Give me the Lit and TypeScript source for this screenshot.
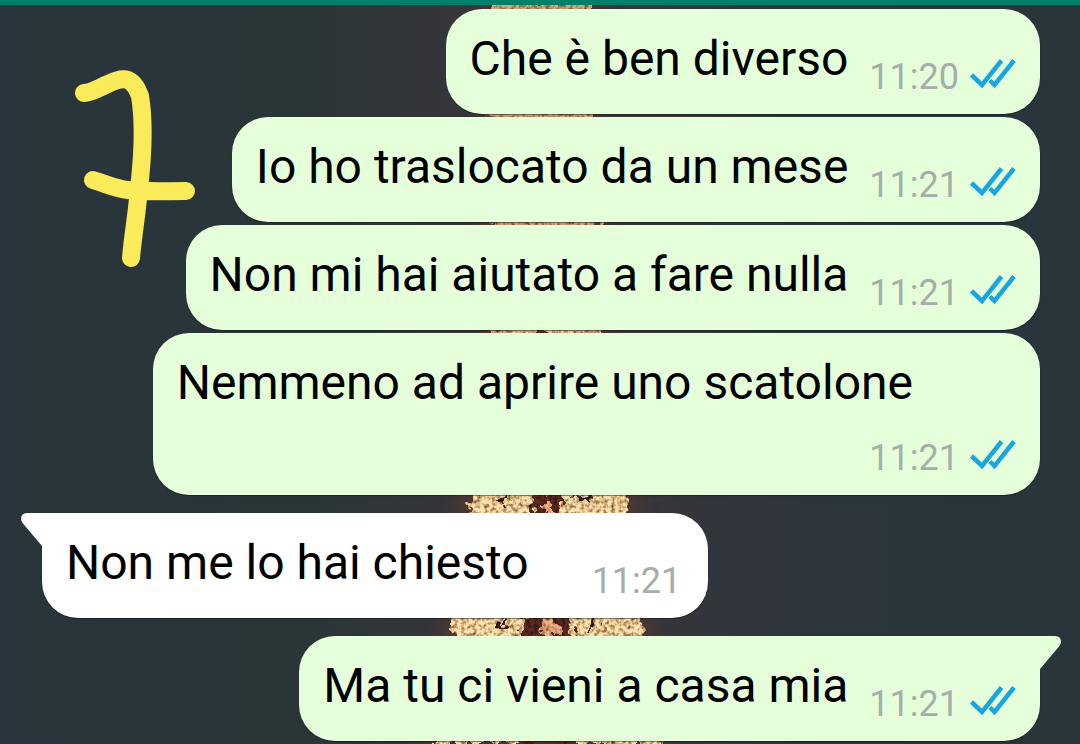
import { LitElement, html, css, svg, nothing } from "lit";
import { customElement, property } from "lit/decorators.js";

interface Message {
  text: string;
  time: string;
  out: boolean;
  tail?: boolean;
  wrap?: boolean;
}

const MESSAGES: Message[] = [
  { text: "Che è ben diverso", time: "11:20", out: true },
  { text: "Io ho traslocato da un mese", time: "11:21", out: true },
  { text: "Non mi hai aiutato a fare nulla", time: "11:21", out: true },
  { text: "Nemmeno ad aprire uno scatolone", time: "11:21", out: true, wrap: true },
  { text: "Non me lo hai chiesto", time: "11:21", out: false, tail: true },
  { text: "Ma tu ci vieni a casa mia", time: "11:21", out: true, tail: true },
];

@customElement("chat-bubble")
export class ChatBubble extends LitElement {
  @property({ attribute: false }) message!: Message;

  static styles = css`
    :host {
      display: block;
      position: relative;
    }
    .bubble {
      display: flex;
      align-items: flex-end;
      gap: 21px;
      min-height: 105px;
      box-sizing: border-box;
      padding: 18px 24px 13px;
      border-radius: 36px;
      background: #e5ffdb;
      box-shadow: 0 1px 1px rgba(10, 20, 20, 0.5);
    }
    .in {
      gap: 63px;
      padding-right: 27px;
      background: #ffffff;
    }
    .in.tail { border-top-left-radius: 0; }
    .out.tail { border-top-right-radius: 0; }
    .wrap {
      flex-direction: column;
      gap: 19px;
    }
    .text {
      margin: 0;
      align-self: flex-start;
      font-size: 48px;
      line-height: 64px;
      color: #000;
    }
    .wrap .text { padding-right: 103px; }
    .meta {
      display: flex;
      align-items: flex-start;
      gap: 10px;
      font-size: 36px;
      line-height: 48px;
      color: #a6aeaa;
    }
    .ticks { width: 47px; height: 32px; padding-top: 4px; }
    .corner {
      position: absolute;
      top: 0;
      width: 22px;
      height: 34px;
    }
    .in + .corner { right: 100%; margin-right: -1px; fill: #fff; }
    .out + .corner { left: 100%; margin-left: -1px; fill: #e5ffdb; }
  `;

  render() {
    const m = this.message;
    const cls = ["bubble", m.out ? "out" : "in", m.tail ? "tail" : "", m.wrap ? "wrap" : ""].join(" ");
    return html`
      <div class=${cls}>
        <p class="text">${m.text}</p>
        <div class="meta">
          <time>${m.time}</time>
          ${m.out
            ? html`<svg class="ticks" viewBox="0 0 47 32" role="img" aria-label="Letto" fill="none" stroke="#18a5e0" stroke-width="4.500">
                <path d="M2.500 18 L13 28 L32.500 3.500" />
                <path d="M21 23.500 L25.500 28 L45 3.500" />
              </svg>`
            : nothing}
        </div>
      </div>
      ${m.tail
        ? html`<svg class="corner" viewBox="0 0 22 34" aria-hidden="true">
            ${m.out
              ? svg`<path d="M0 0 H16 Q22 0 22 6 Q22 8 20 10.500 L1 33 H0 Z" />`
              : svg`<path d="M22 0 H6 Q0 0 0 6 Q0 8 2 10.500 L21 33 H22 Z" />`}
          </svg>`
        : nothing}
    `;
  }
}

@customElement("app-root")
export class AppRoot extends LitElement {
  static styles = css`
    :host {
      display: block;
      position: relative;
      min-height: 100vh;
      overflow: hidden;
      font-family: Roboto, "Liberation Sans", sans-serif;
      background: linear-gradient(90deg, #28353c, #2b3538 30%, #37353b 44%, #37353b 58%, #2c353b 76%, #28353b);
    }
    .wallpaper,
    .drawing {
      position: absolute;
      top: 0;
    }
    .wallpaper {
      left: 50%;
      margin-left: -140px;
      width: 280px;
      height: 744px;
    }
    .drawing {
      left: 60px;
      top: 50px;
      width: 150px;
      height: 230px;
    }
    .bar {
      position: relative;
      height: 5px;
      background: #00806a;
    }
    .chat {
      position: relative;
      display: flex;
      flex-direction: column;
      align-items: flex-end;
      gap: 3px;
      margin: 0;
      padding: 4px 40px 3px 42px;
      list-style: none;
    }
    .in { align-self: flex-start; }
    .turn { margin-top: 15px; }
  `;

  private wallpaper() {
    return html`<svg class="wallpaper" viewBox="400 0 280 744" aria-hidden="true">
      <defs>
        <filter id="glow" x="-20%" width="140%"><feGaussianBlur stdDeviation="10 4" /></filter>
        <filter id="grain" x="-10%" width="120%" y="0" height="100%" color-interpolation-filters="sRGB">
          <feTurbulence type="fractalNoise" baseFrequency="0.26 0.24" numOctaves="2" seed="8" />
          <feColorMatrix values="1.5 0 0 0 0.16  1.7 0 0 0 0  1.8 0 0 0 -0.14  0 0 0 0 1" result="tex" />
          <feTurbulence type="fractalNoise" baseFrequency="0.12" numOctaves="2" seed="3" result="edge" />
          <feDisplacementMap in="SourceGraphic" in2="edge" scale="22" xChannelSelector="R" yChannelSelector="G" result="shape" />
          <feComposite in="tex" in2="shape" operator="arithmetic" k1="0.9" k2="0" k3="0.08" k4="0" result="lit" />
          <feComposite in="lit" in2="shape" operator="in" />
        </filter>
      </defs>
      <path d="M486 0 H596 L612 333 L636 500 L652 630 L670 744 H424 L444 630 L460 500 L480 333 Z" fill="#59372f" opacity="0.8" filter="url(#glow)" />
      <g filter="url(#grain)">
        <path d="M492 0 H592 L601 333 H490 Z" fill="#cfa888" />
        <path d="M490 333 H601 L628 500 L644 630 L662 744 H434 L452 630 L470 500 Z" fill="#ffe6b8" />
        <path d="M536 320 H548 L561 500 L572 630 L578 744 H518 L522 630 L534 500 Z" fill="#5c2a25" />
        <path d="M540 636 L544 614 H556 L560 636 Z M541 503 H553 V509 H541 Z" fill="#f0b58c" />
        <path d="M494 502 L504 494 L508 503 Z M574 500 L583 494 L594 502 Z M494 629 L503 619 L507 629 Z M586 628 L594 618 L600 628 Z" fill="#351b14" />
      </g>
    </svg>`;
  }

  render() {
    return html`
      ${this.wallpaper()}
      <div class="bar"></div>
      <ul class="chat">
        ${MESSAGES.map((m, i) => {
          const turn = i > 0 && MESSAGES[i - 1].out !== m.out;
          return html`<li class="${m.out ? "out" : "in"} ${turn ? "turn" : ""}">
            <chat-bubble .message=${m}></chat-bubble>
          </li>`;
        })}
      </ul>
      <svg class="drawing" viewBox="60 50 150 230" aria-hidden="true" fill="none" stroke="#f9eb5a" stroke-width="18" stroke-linecap="round" stroke-linejoin="round">
        <path d="M84 93 C94 92 100 87 108 84 C116 80 122 78 128 80 C135 83 138 91 140 96 C143 114 143 137 142 155 C141 171 140 181 138 198 C136 220 133 235 131 258" />
        <path d="M93 180 C106 184 117 189 128 190 C145 192 165 191 186 191" />
      </svg>
    `;
  }
}
